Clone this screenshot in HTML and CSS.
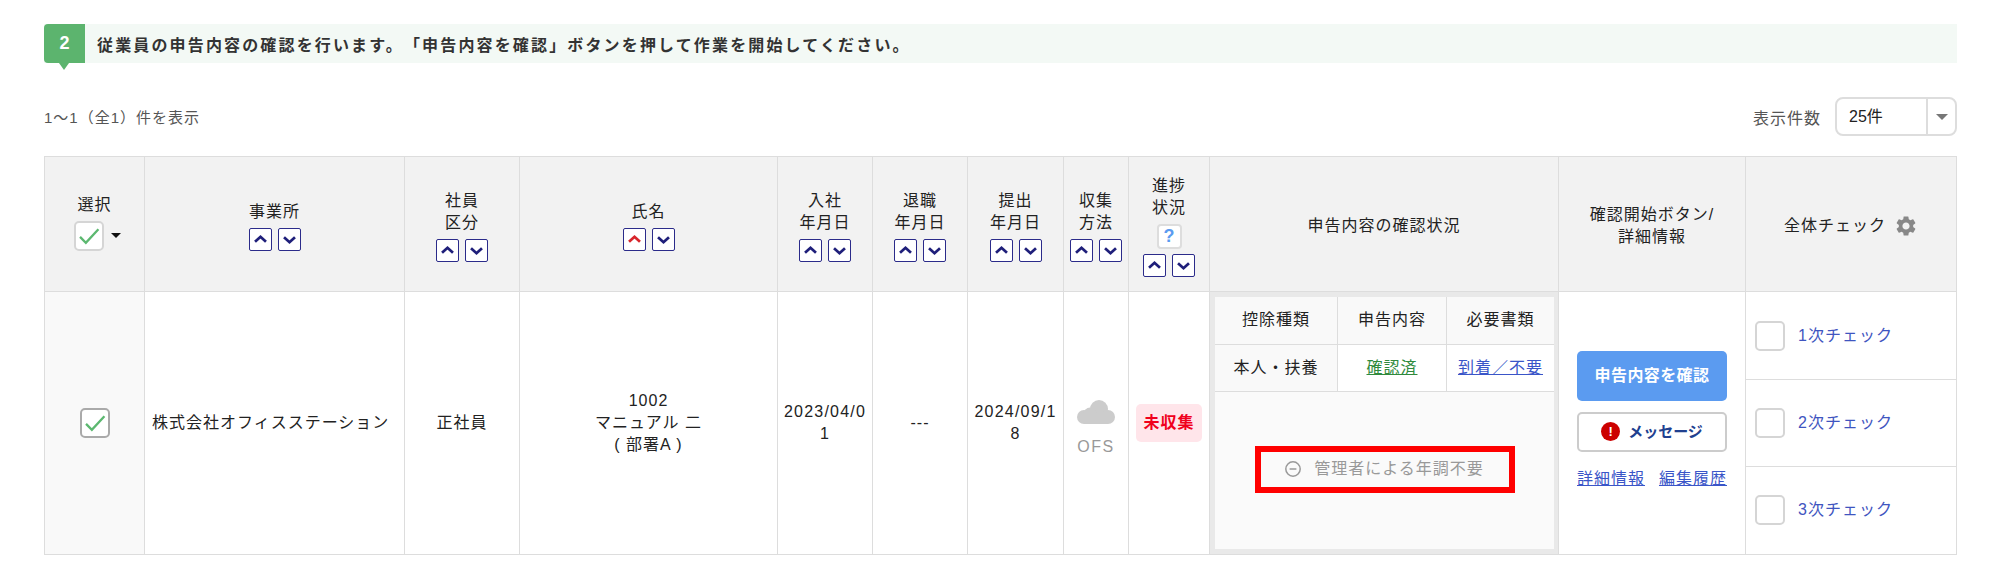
FILE: index.html
```html
<!DOCTYPE html>
<html lang="ja">
<head>
<meta charset="utf-8">
<title>申告内容の確認</title>
<link rel="stylesheet" href="styles.css">
</head>
<body>
<svg class="defs" width="0" height="0" aria-hidden="true">
  <symbol id="up" viewBox="0 0 23 23"><path d="M5.5 14 11.5 8.5 17.5 14" fill="none" stroke-width="3"/></symbol>
  <symbol id="down" viewBox="0 0 23 23"><path d="M5.5 9 11.5 14.5 17.5 9" fill="none" stroke-width="3"/></symbol>
  <symbol id="check" viewBox="0 0 29 29"><path d="M4.5 15.5 11 22 25 7" fill="none" stroke="#5cb870" stroke-width="2.6"/></symbol>
</svg>
<main class="page">
  <div class="banner">
    <div class="step">2</div>
    <p class="banner-text">従業員の申告内容の確認を行います。「申告内容を確認」ボタンを押して作業を開始してください。</p>
  </div>
  <div class="toolbar">
    <span class="count">1〜1（全1）件を表示</span>
    <div class="per-page">
      <span class="count count-label">表示件数</span>
      <div class="select"><span class="select-value">25件</span><span class="select-arrow"><i class="tri"></i></span></div>
    </div>
  </div>
  <table class="grid">
    <colgroup>
      <col class="c1"><col class="c2"><col class="c3"><col class="c4"><col class="c5"><col class="c6"><col class="c7"><col class="c8"><col class="c9"><col class="c10"><col class="c11"><col class="c12">
    </colgroup>
    <thead>
      <tr>
        <th class="th-sel">
          <div class="hd">選択</div>
          <div class="sel-all"><span class="box box-head"><svg class="chk"><use href="#check"/></svg></span><i class="caret"></i></div>
        </th>
        <th><div class="hd">事業所</div><div class="sort"><span class="sb"><svg><use href="#up"/></svg></span><span class="sb"><svg><use href="#down"/></svg></span></div></th>
        <th><div class="hd">社員<br>区分</div><div class="sort"><span class="sb"><svg><use href="#up"/></svg></span><span class="sb"><svg><use href="#down"/></svg></span></div></th>
        <th><div class="hd">氏名</div><div class="sort"><span class="sb sb-on"><svg><use href="#up"/></svg></span><span class="sb"><svg><use href="#down"/></svg></span></div></th>
        <th><div class="hd">入社<br>年月日</div><div class="sort"><span class="sb"><svg><use href="#up"/></svg></span><span class="sb"><svg><use href="#down"/></svg></span></div></th>
        <th><div class="hd">退職<br>年月日</div><div class="sort"><span class="sb"><svg><use href="#up"/></svg></span><span class="sb"><svg><use href="#down"/></svg></span></div></th>
        <th><div class="hd">提出<br>年月日</div><div class="sort"><span class="sb"><svg><use href="#up"/></svg></span><span class="sb"><svg><use href="#down"/></svg></span></div></th>
        <th><div class="hd">収集<br>方法</div><div class="sort"><span class="sb"><svg><use href="#up"/></svg></span><span class="sb"><svg><use href="#down"/></svg></span></div></th>
        <th><div class="hd">進捗<br>状況</div><div class="help">?</div><div class="sort"><span class="sb"><svg><use href="#up"/></svg></span><span class="sb"><svg><use href="#down"/></svg></span></div></th>
        <th><div class="hd">申告内容の確認状況</div></th>
        <th><div class="hd">確認開始ボタン/<br>詳細情報</div></th>
        <th>
          <div class="all-check"><span class="hd">全体チェック</span>
            <svg class="gear" viewBox="0 0 24 24"><path d="M19.14 12.94c.04-.3.06-.61.06-.94 0-.32-.02-.64-.07-.94l2.03-1.58a.49.49 0 0 0 .12-.61l-1.92-3.32a.488.488 0 0 0-.59-.22l-2.39.96c-.5-.38-1.03-.7-1.62-.94l-.36-2.54a.484.484 0 0 0-.48-.41h-3.84c-.24 0-.43.17-.47.41l-.36 2.54c-.59.24-1.13.57-1.62.94l-2.39-.96c-.22-.08-.47 0-.59.22L2.74 8.87c-.12.21-.08.47.12.61l2.03 1.58c-.05.3-.09.63-.09.94s.02.64.07.94l-2.03 1.58a.49.49 0 0 0-.12.61l1.92 3.32c.12.22.37.29.59.22l2.39-.96c.5.38 1.03.7 1.62.94l.36 2.54c.05.24.24.41.48.41h3.84c.24 0 .44-.17.47-.41l.36-2.54c.59-.24 1.13-.56 1.62-.94l2.39.96c.22.08.47 0 .59-.22l1.92-3.32c.12-.22.07-.47-.12-.61l-2.01-1.58zM12 15.6c-1.98 0-3.6-1.62-3.6-3.6s1.62-3.6 3.6-3.6 3.6 1.62 3.6 3.6-1.62 3.6-3.6 3.6z"/></svg>
          </div>
        </th>
      </tr>
    </thead>
    <tbody>
      <tr>
        <td class="td-sel"><span class="box box-row"><svg class="chk"><use href="#check"/></svg></span></td>
        <td class="td-left">株式会社オフィスステーション</td>
        <td>正社員</td>
        <td>1002<br>マニュアル 二<br>( 部署A )</td>
        <td class="td-date">2023/04/01</td>
        <td>---</td>
        <td class="td-date">2024/09/18</td>
        <td>
          <svg class="cloud" viewBox="0 0 38 24"><circle cx="22" cy="9" r="9"/><circle cx="31" cy="17" r="7"/><circle cx="7" cy="17" r="7"/><circle cx="13" cy="14" r="6.5"/><rect x="7" y="14" width="24" height="10"/></svg>
          <div class="ofs">OFS</div>
        </td>
        <td><span class="badge">未収集</span></td>
        <td class="td-status">
          <div class="status">
            <div class="status-row">
              <div class="st st-1">控除種類</div><div class="st st-2">申告内容</div><div class="st st-3">必要書類</div>
            </div>
            <div class="status-row">
              <div class="st st-1">本人・扶養</div><div class="st st-2 st-w"><a class="lnk-g">確認済</a></div><div class="st st-3 st-w"><a class="lnk">到着／不要</a></div>
            </div>
            <div class="status-foot">
              <div class="notice">
                <svg class="minus" viewBox="0 0 16 16"><circle cx="8" cy="8" r="7.2" fill="none" stroke="#999" stroke-width="1.5"/><path d="M4.6 8h6.8" stroke="#999" stroke-width="1.5"/></svg>
                <span>管理者による年調不要</span>
              </div>
            </div>
          </div>
        </td>
        <td class="td-actions">
          <div class="actions">
            <button class="btn-primary" type="button">申告内容を確認</button>
            <button class="btn-msg" type="button"><span class="alert">!</span><span>メッセージ</span></button>
            <div class="links"><a class="lnk">詳細情報</a><a class="lnk">編集履歴</a></div>
          </div>
        </td>
        <td class="td-checks">
          <div class="checks">
            <div class="check-row"><span class="box"></span><span class="check-label">1次チェック</span></div>
            <div class="check-row"><span class="box"></span><span class="check-label">2次チェック</span></div>
            <div class="check-row"><span class="box"></span><span class="check-label">3次チェック</span></div>
          </div>
        </td>
      </tr>
    </tbody>
  </table>
</main>
</body>
</html>
```

FILE: styles.css
```css
* { box-sizing: border-box; }
html, body { margin: 0; padding: 0; background: #fff; }
body {
  font-family: "Liberation Sans", "Noto Sans CJK JP", sans-serif;
  font-size: 16px;
  letter-spacing: 1px;
  text-spacing-trim: space-all;
  color: #222;
}
.defs { position: absolute; }
.page { padding: 24px 43px 0 44px; }

.banner { display: flex; align-items: center; height: 39px; background: #f3f9f5; }
.step {
  position: relative;
  flex: none;
  width: 41px;
  height: 39px;
  display: flex;
  align-items: center;
  justify-content: center;
  background: #5cb46e;
  color: #fff;
  font-size: 18px;
  font-weight: 700;
  letter-spacing: 0;
  border-radius: 4px 0 0 4px;
}
.step::after {
  content: "";
  position: absolute;
  left: 15px;
  bottom: -7px;
  border-left: 5px solid transparent;
  border-right: 5px solid transparent;
  border-top: 7px solid #5cb46e;
}
.banner-text { margin: 0 0 0 12px; font-size: 16px; font-weight: 700; letter-spacing: 2.15px; color: #333; }

.toolbar { display: flex; justify-content: space-between; align-items: center; margin: 34px 0 20px; height: 39px; }
.count { font-size: 15px; letter-spacing: 1px; color: #555; }
.count-label { font-size: 16px; }
.per-page { display: flex; align-items: center; gap: 14px; }
.select {
  display: flex;
  width: 122px;
  height: 39px;
  border: 2px solid #ddd;
  border-radius: 8px;
  background: #fff;
}
.select-value { flex: 1; padding-left: 12px; line-height: 35px; letter-spacing: 0; font-size: 16px; color: #222; }
.select-arrow { width: 29px; border-left: 2px solid #ddd; display: flex; align-items: center; justify-content: center; }
.tri { border-left: 6px solid transparent; border-right: 6px solid transparent; border-top: 6px solid #777; }

.grid { width: 1912px; table-layout: fixed; border-collapse: collapse; }
.c1 { width: 100px; } .c2 { width: 260px; } .c3 { width: 115px; } .c4 { width: 258px; }
.c5 { width: 95px; } .c6 { width: 95px; } .c7 { width: 96px; } .c8 { width: 65px; }
.c9 { width: 81px; } .c10 { width: 349px; } .c11 { width: 187px; } .c12 { width: 211px; }
.grid th, .grid td { border: 1px solid #ddd; text-align: center; vertical-align: middle; padding: 0; font-weight: 400; }
.grid th { height: 135px; background: #f2f2f2; padding-top: 4px; }
.grid .th-sel { padding: 0 0 4px; }
.grid td { height: 262px; line-height: 22px; }
.hd { line-height: 22px; color: #222; }

.sort { display: flex; justify-content: center; gap: 6px; margin-top: 5px; }
.sb {
  width: 23px;
  height: 23px;
  border: 1px solid #2b2b8a;
  border-radius: 2px;
  background: #fff;
  display: block;
  stroke: #1f1f7a;
}
.sb svg { display: block; width: 21px; height: 21px; }
.sb-on { stroke: #d8262c; }
.sel-all { display: flex; align-items: center; justify-content: center; gap: 7px; margin-top: 5px; padding-left: 6px; }
.box {
  display: block;
  flex: none;
  width: 30px;
  height: 30px;
  border: 2px solid #d5d5d5;
  border-radius: 5px;
  background: #fff;
}
.box-row { border-color: #aaa; margin: 0 auto; }
.chk { display: block; width: 26px; height: 26px; }
.caret { border-left: 5px solid transparent; border-right: 5px solid transparent; border-top: 5px solid #111; }
.help {
  width: 25px;
  height: 25px;
  margin: 5px auto 0;
  border: 2px solid #ddd;
  border-radius: 4px;
  background: #fff;
  color: #5b9bf0;
  font-size: 18px;
  font-weight: 700;
  letter-spacing: 0;
  line-height: 21px;
}
.all-check { display: flex; align-items: center; justify-content: center; gap: 8px; }
.gear { width: 24px; height: 24px; fill: #888; }

.td-sel { background: #f9f9f9; }
.grid .td-left { text-align: left; padding-left: 7px; }
.grid .td-date { padding: 0 5px; word-break: break-all; letter-spacing: 1.2px; }
.cloud { display: block; width: 38px; height: 24px; margin: 12px auto 0; fill: #ccc; }
.ofs { margin-top: 12px; color: #999; letter-spacing: 1.5px; }
.badge {
  display: block;
  width: 66px;
  height: 38px;
  margin: 0 auto;
  line-height: 38px;
  background: #ffe5ea;
  color: #f0001c;
  border-radius: 5px;
  font-weight: 700;
  letter-spacing: 1px;
}

.grid .td-status { background: #e9e9e9; padding: 5px 4px 5px 5px; }
.status { display: flex; flex-direction: column; height: 252px; }
.status-row { display: flex; height: 47.5px; border-bottom: 1px solid #ddd; }
.st { display: flex; align-items: center; justify-content: center; background: #f9f9f9; }
.st-1 { width: 123px; border-right: 1px solid #ddd; }
.st-2 { width: 109px; border-right: 1px solid #ddd; }
.st-3 { flex: 1; }
.st-w { background: #fff; }
.status-foot { flex: 1; display: flex; align-items: center; justify-content: center; background: #fafafa; }
.notice {
  width: 260px;
  height: 47px;
  margin-bottom: 3px;
  border: 6px solid #f00;
  display: flex;
  align-items: center;
  justify-content: center;
  gap: 13px;
  color: #999;
}
.minus { width: 16px; height: 16px; flex: none; }

a { cursor: pointer; }
.lnk { color: #3a55c8; text-decoration: underline; white-space: nowrap; }
.lnk-g { color: #2f8a3c; text-decoration: underline; }

.actions { display: flex; flex-direction: column; align-items: center; width: 150px; margin: -6px auto 0; }
.btn-primary {
  width: 150px;
  height: 50px;
  border: 0;
  border-radius: 5px;
  background: #5b9bf0;
  color: #fff;
  font: inherit;
  font-weight: 700;
  letter-spacing: .4px;
}
.btn-msg {
  width: 150px;
  height: 40px;
  margin-top: 11px;
  border: 2px solid #ccc;
  border-radius: 5px;
  background: #fff;
  color: #20408f;
  font: inherit;
  font-size: 15px;
  font-weight: 700;
  letter-spacing: 0;
  display: flex;
  align-items: center;
  justify-content: center;
  gap: 8px;
}
.alert {
  width: 19px;
  height: 19px;
  border-radius: 50%;
  background: #cc0000;
  color: #fff;
  font-size: 13px;
  line-height: 19px;
}
.links { display: flex; justify-content: space-between; width: 100%; margin-top: 16px; }

.grid .td-checks { padding: 0; }
.checks { display: flex; flex-direction: column; height: 261px; }
.check-row { flex: 1; display: flex; align-items: center; gap: 13px; padding-left: 9px; border-bottom: 1px solid #ddd; }
.check-row:last-child { border-bottom: 0; }
.check-label { color: #3f55c0; }
```
